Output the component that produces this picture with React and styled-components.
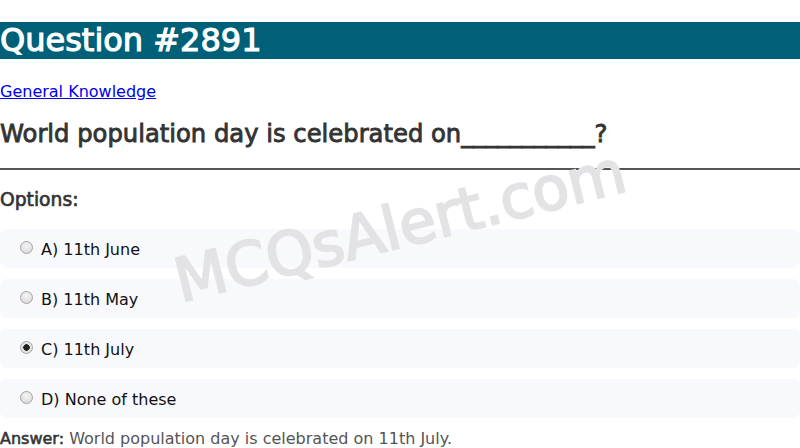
import React from 'react'
import styled, { createGlobalStyle, css } from 'styled-components'

const GlobalStyle = createGlobalStyle`
    html, body {
        margin: 0;
        padding: 0;
        background: #fff;
    }
    body {
        font-family: "DejaVu Sans", Verdana, sans-serif;
        font-size: 16px;
        color: #333;
    }
`

// the page's bold is the regular face thickened, not the real bold face
const fakeBold = css`
    font-weight: normal;
    -webkit-text-stroke: 0.035em currentColor;
`

const Page = styled.div`
    position: relative;
    overflow: hidden;
    min-height: 448px;
    display: flow-root;
`

const Title = styled.h1`
    margin: 21.5px 0 0;
    background: #006078;
    color: #fff;
    font-size: 32px;
    line-height: 37px;
    ${fakeBold}
`

const Category = styled.p`
    margin: 24px 0 0;
    line-height: 18.5px;

    a {
        color: #0000ee;
    }
`

const QuestionText = styled.h2`
    margin: 19px 0 0;
    font-size: 24.25px;
    line-height: 28px;
    color: #333;
    ${fakeBold}
`

const Divider = styled.hr`
    margin: 20px 0 0;
    border: 0;
    border-top: 2px solid #555;
`

const OptionsLabel = styled.h3`
    margin: 18.7px 0;
    font-size: 18.72px;
    line-height: 21.8px;
    color: #333;
    ${fakeBold}
`

const OptionList = styled.div`
    display: flex;
    flex-direction: column;
    gap: 11.5px;
`

const Option = styled.label`
    display: flex;
    align-items: center;
    gap: 7px;
    height: 38.5px;
    padding: 3px 20px 0;
    box-sizing: border-box;
    background: #f8f9fc;
    border-radius: 7px;
    color: #111;
    line-height: 18px;
`

const Radio = styled.input.attrs({ type: 'radio' })`
    appearance: none;
    margin: 0 1px 0 0;
    width: 13px;
    height: 13px;
    border-radius: 50%;
    border: 1px solid #a5a5a5;
    background: radial-gradient(circle at 50% 35%, #f4f4f4, #d6d6d6);
    position: relative;
    top: -2px;

    &:checked {
        background: radial-gradient(circle, #222 0 3px, #e2e2e2 3.5px);
    }
`

const Answer = styled.p`
    margin: 12.5px 0 0;
    line-height: 18.5px;
    color: #555;

    strong {
        color: #333;
        ${fakeBold}
    }
`

const Watermark = styled.div`
    position: absolute;
    left: 400px;
    top: 226px;
    transform: translate(-50%, -50%) rotate(-14deg);
    font-size: 60px;
    color: #e3e3e5;
    white-space: nowrap;
    pointer-events: none;
    ${fakeBold}
`

const options = [
    { key: 'A', text: '11th June' },
    { key: 'B', text: '11th May' },
    { key: 'C', text: '11th July', checked: true },
    { key: 'D', text: 'None of these' },
]

const App = () => {
    return (
        <Page>
            <GlobalStyle />
            <Title>Question #2891</Title>
            <Category>
                <a href="#">General Knowledge</a>
            </Category>
            <QuestionText>World population day is celebrated on___________?</QuestionText>
            <Divider />
            <OptionsLabel>Options:</OptionsLabel>
            <OptionList>
                {options.map(o => (
                    <Option key={o.key}>
                        <Radio name="q2891" defaultChecked={o.checked} />
                        {o.key}) {o.text}
                    </Option>
                ))}
            </OptionList>
            <Answer>
                <strong>Answer:</strong> World population day is celebrated on 11th July.
            </Answer>
            <Watermark>MCQsAlert.com</Watermark>
        </Page>
    )
}

export default App
